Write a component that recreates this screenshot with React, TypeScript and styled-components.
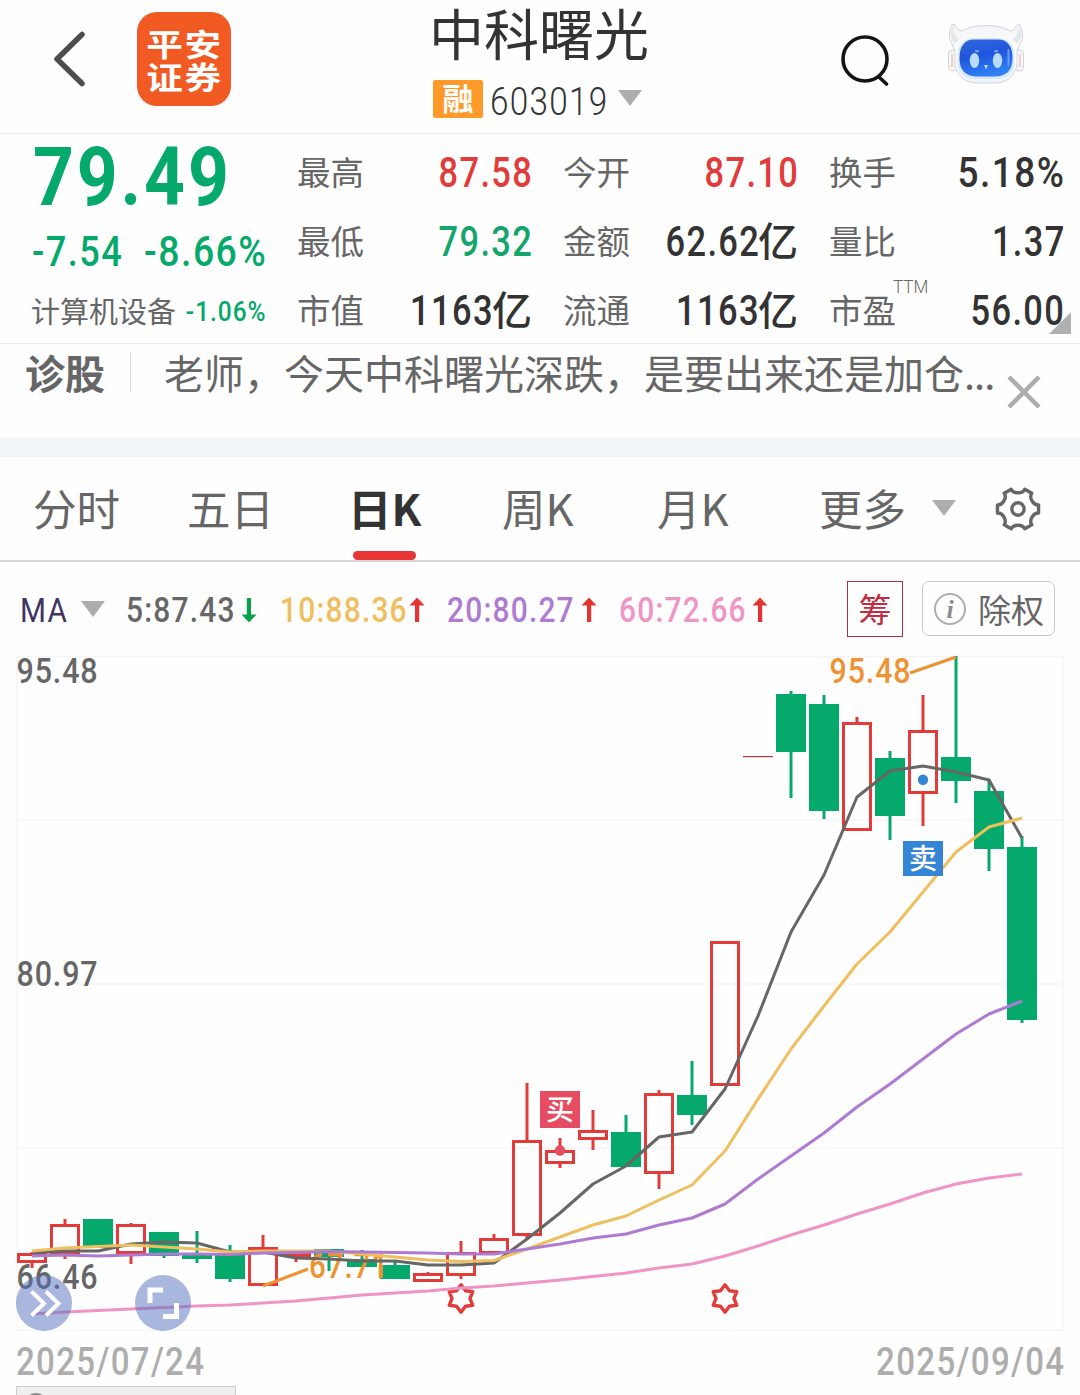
import React from 'react';
import styled, { createGlobalStyle } from 'styled-components';

const CJK = `'Noto Sans CJK SC', sans-serif`;
const GREEN = '#04a96b';
const RED = '#e23c3a';

const Global = createGlobalStyle`
  *, *::before, *::after { box-sizing: border-box; }
  body { margin: 0; background: #fefefe; font-family: ${CJK}; color: #666; }
`;

const Screen = styled.div`
  width: 1080px;
  height: 1395px;
  overflow: hidden;
  display: flex;
  flex-direction: column;
  background: #fefefe;
`;

/* Condensed numerals, squeezed towards one side */
const Num = styled.span<{ $size: number; $k?: number; $w?: number; $c?: string; $from?: string }>`
  display: inline-block;
  flex: none;
  font-family: Roboto, ${CJK};
  font-size: ${(p) => p.$size}px;
  font-weight: ${(p) => p.$w ?? 400};
  line-height: 1;
  letter-spacing: 0.04em;
  margin-right: -0.04em;
  color: ${(p) => p.$c ?? 'inherit'};
  white-space: pre;
  transform: scaleX(${(p) => p.$k ?? 0.82});
  transform-origin: ${(p) => (p.$from === 'right' ? 'calc(100% - 0.04em)' : 'left')} center;
`;

const Header = styled.header`
  height: 134px;
  flex: none;
  display: grid;
  grid-template-columns: 137px 94px 202px 217px 180px 60px 1fr;
  border-bottom: 1px solid #ebebeb;
`;
const BackCell = styled.div`padding: 30px 0 0 51px;`;
const Logo = styled.div`
  width: 94px;
  height: 94px;
  margin-top: 12px;
  border-radius: 20px;
  background: #f15a22;
  display: flex;
  flex-direction: column;
  align-items: center;
  padding-top: 14px;
`;
const LogoLine = styled.span`
  font-size: 31px;
  line-height: 33px;
  font-weight: 700;
  letter-spacing: 1.5px;
  margin-right: -1.5px;
  color: #fff;
  transform: scaleX(1.18);
`;
const TitleCell = styled.div`grid-column: 4;`;
const Title = styled.h1`
  margin: 0 0 0 -4px;
  font-size: 55px;
  line-height: 62px;
  height: 80px;
  font-weight: 400;
  color: #333;
  white-space: nowrap;
`;
const CodeRow = styled.div`
  display: flex;
  align-items: center;
  height: 38px;
  color: #333;
`;
const Badge = styled.span`
  width: 50px;
  height: 38px;
  margin-right: 7px;
  border-radius: 2px;
  background: #ff9a2a;
  color: #fff;
  font-size: 31px;
  line-height: 34px;
  font-weight: 700;
  text-align: center;
`;
const CodeBox = styled.span`
  width: 128px;
  height: 38px;
  display: flex;
  align-items: center;
  padding-top: 5px;
`;
const Caret = styled.i`
  flex: none;
  margin-top: -3px;
  border: 12.5px solid transparent;
  border-top: 16px solid #adadad;
  border-bottom: 0;
`;
const SearchCell = styled.div`grid-column: 6; padding: 33px 0 0 8px;`;
const RobotCell = styled.div`padding: 20px 0 0 55px;`;

const Quote = styled.section`
  position: relative;
  height: 210px;
  flex: none;
  display: flex;
  padding-left: 32px;
  border-bottom: 1px solid #ebebeb;
`;
const PriceBlock = styled.div`width: 266px; color: ${GREEN};`;
const PriceLine = styled.div`height: 85px; padding: 2px 0 0 1px;`;
const ChangeLine = styled.div`
  display: flex;
  width: 234px;
  height: 66px;
  align-items: center;
`;
const RightSlot = styled.span`
  flex: 1;
  min-width: 0;
  display: flex;
  justify-content: flex-end;
`;
const SectorLine = styled(ChangeLine)`height: 54px;`;
const Sector = styled.span`font-size: 29px; line-height: 40px; margin: -4px 0 0 -1px; color: #666; white-space: nowrap;`;
const Stats = styled.div`
  display: grid;
  grid-template-columns: repeat(3, 234px);
  grid-template-rows: repeat(3, 69px);
  column-gap: 32px;
  padding-top: 4px;
`;
const Stat = styled.div`
  display: flex;
  align-items: center;
  justify-content: space-between;
`;
const StatName = styled.span`
  position: relative;
  font-size: 33.5px;
  line-height: 40px;
  margin: -3px 0 0 -1px;
  white-space: nowrap;
`;
const Sup = styled.span`
  position: absolute;
  left: 64px;
  top: -12px;
  font: 300 19px/20px Roboto, sans-serif;
  transform: scaleX(0.9);
  transform-origin: left;
`;
const StatValue = styled.span<{ $c: string }>`
  display: flex;
  align-items: center;
  color: ${(p) => p.$c};
`;
const Unit = styled.span`
  font-size: 40px;
  line-height: 46px;
  font-weight: 500;
  margin: -6px 0 0 -1px;
`;
const Corner = styled.i`
  position: absolute;
  right: 9px;
  bottom: 9px;
  border-left: 22px solid transparent;
  border-bottom: 22px solid #b0b0b0;
`;

const Advice = styled.section`
  height: 94px;
  flex: none;
  display: flex;
  padding-left: 25px;
  font-size: 40px;
  line-height: 56px;
`;
const AdviceTag = styled.b`width: 105px; font-weight: 700;`;
const AdviceRule = styled.i`width: 1px; height: 40px; margin-top: 8px; background: #dcdcdc;`;
const AdviceText = styled.span`width: 876px; padding-left: 33px; white-space: nowrap; display: flex;`;
const Dots = styled.span`letter-spacing: -1px;`;
const CloseIcon = styled.svg`margin-top: 31px;`;
const Divider = styled.div`height: 19px; flex: none; background: #f3f4f8;`;

const Tabs = styled.nav`
  height: 105px;
  flex: none;
  display: grid;
  grid-template-columns: 154px 154px 161px 155px 162px 112px 62px 1fr;
  padding-left: 34px;
  border-bottom: 2px solid #d6d6d6;
`;
const Tab = styled.div<{ $on?: boolean }>`
  display: flex;
  flex-direction: column;
  font-size: 43.5px;
  line-height: 94px;
  height: 103px;
  padding-top: 4px;
  margin-left: ${(p) => (p.$on ? '6px' : '-1px')};
  font-weight: ${(p) => (p.$on ? 700 : 400)};
  color: ${(p) => (p.$on ? '#333' : '#666')};
  white-space: nowrap;
  &::after {
    content: '';
    display: ${(p) => (p.$on ? 'block' : 'none')};
    width: 63px;
    height: 9px;
    margin: -4px 0 0 5px;
    border-radius: 5px;
    background: #e83434;
    flex: none;
  }
`;
const TabIcon = styled.div`padding-top: 46px;`;
const GearBox = styled.div`padding-top: 28px;`;

const MaRow = styled.div`
  height: 94px;
  flex: none;
  display: grid;
  grid-template-columns: 61px 45px 154px 167px 172px 228px 75px 133px;
  padding-left: 20px;
`;
const MaCell = styled.div<{ $c: string }>`
  display: flex;
  align-items: center;
  height: 96px;
  color: ${(p) => p.$c};
`;
const NumSlot = styled.span<{ $w: number }>`
  width: ${(p) => p.$w}px;
  flex: none;
  display: flex;
`;
const ChipButton = styled.button`
  width: 56px;
  height: 56px;
  margin: 19px 0 0;
  padding: 0 0 2px;
  border: 1px solid #a83246;
  background: none;
  color: #c42a40;
  font: 400 33px/50px ${CJK};
`;
const RightsButton = styled.button`
  width: 133px;
  height: 55px;
  margin: 19px 0 0;
  padding: 0 0 0 11px;
  display: flex;
  align-items: center;
  gap: 12px;
  border: 1px solid #c8c8c8;
  border-radius: 7px;
  background: none;
  color: #666;
  font: 400 33px/50px ${CJK};
  white-space: nowrap;
`;

const ChartArea = styled.section`
  position: relative;
  height: 675px;
  flex: none;
`;
const ChartSvg = styled.svg`display: block; overflow: visible;`;
const Round = styled.button<{ $x: number }>`
  position: absolute;
  left: ${(p) => p.$x}px;
  top: 619px;
  width: 56px;
  height: 56px;
  padding: 0;
  border: 0;
  border-radius: 50%;
  background: rgba(83, 111, 189, 0.5);
`;
const Dates = styled.div`
  height: 55px;
  flex: none;
  display: flex;
  justify-content: space-between;
  align-items: center;
  padding: 7px 16px 0;
  color: #adadad;
`;
const BottomBox = styled.div`
  width: 220px;
  height: 40px;
  margin-left: 16px;
  border: 1px solid #ccc;
  background: #efefef;
  padding: 6px 0 0 7px;
`;
const Knob = styled.i`
  display: block;
  width: 24px;
  height: 24px;
  border-radius: 50%;
  border: 3px solid #8a8a8a;
`;

/* [up, bodyTop, bodyBottom, wickTop, wickBottom] in page pixels */
const candles: [number, number, number, number, number][] = [
  [1, 1253, 1263, 1252, 1268],
  [1, 1224, 1254, 1219, 1259],
  [0, 1219, 1248, 1219, 1248],
  [1, 1224, 1254, 1223, 1264],
  [0, 1232, 1256, 1232, 1258],
  [0, 1254, 1259, 1231, 1263],
  [0, 1254, 1279, 1245, 1282],
  [1, 1247, 1286, 1235, 1286],
  [1, 1252, 1257, 1252, 1262],
  [0, 1249, 1257, 1249, 1271],
  [0, 1259, 1267, 1250, 1267],
  [0, 1265, 1279, 1262, 1279],
  [1, 1273, 1282, 1272, 1282],
  [1, 1252, 1276, 1241, 1279],
  [1, 1238, 1254, 1234, 1254],
  [1, 1140, 1236, 1083, 1238],
  [1, 1150, 1164, 1138, 1168],
  [1, 1130, 1140, 1110, 1150],
  [0, 1132, 1167, 1115, 1167],
  [1, 1093, 1174, 1090, 1189],
  [0, 1095, 1115, 1061, 1125],
  [1, 941, 1086, 941, 1086],
  [1, 756, 757, 756, 757],
  [0, 694, 752, 691, 798],
  [0, 704, 811, 695, 819],
  [1, 722, 831, 717, 831],
  [0, 758, 816, 751, 840],
  [1, 730, 794, 695, 826],
  [0, 757, 781, 656, 803],
  [0, 791, 849, 779, 871],
  [0, 847, 1020, 836, 1023],
];
const ma5 = [1253, 1251, 1251, 1244, 1242, 1243, 1252, 1252, 1258, 1259, 1261, 1261, 1265, 1265, 1263, 1239, 1213, 1184, 1166, 1137, 1132, 1089, 1016, 932, 875, 797, 771, 766, 772, 780, 838];
const ma10 = [1251, 1248, 1246.5, 1245, 1247, 1249, 1252, 1251, 1251, 1251, 1254, 1257, 1260, 1261.5, 1260.5, 1249, 1237, 1225, 1216, 1200, 1185, 1151, 1099, 1049, 1006, 964, 932, 892, 852, 827, 818];
const ma20 = [1256, 1255, 1256, 1255, 1254, 1254, 1254.5, 1253, 1252.5, 1251.5, 1252, 1252.5, 1253, 1254, 1254, 1249, 1244, 1238, 1234, 1225, 1218, 1204, 1179, 1156, 1133, 1107, 1084, 1059, 1034, 1014, 1001];
const ma60 = [1314, 1312, 1310.5, 1309, 1307.5, 1306, 1305, 1303, 1301, 1298, 1295, 1293, 1291, 1288, 1286, 1283, 1280, 1276.5, 1273, 1268, 1264, 1256, 1246, 1235, 1225, 1214, 1204, 1193, 1184, 1178, 1174];

const cx = (i: number) => 32 + i * 33;
const line = (v: number[]) => v.map((y, i) => `${cx(i)},${y}`).join(' ');

function Candle({ i }: { i: number }) {
  const [up, t, b, wt, wb] = candles[i];
  const x = cx(i);
  if (b - t === 1) return <rect x={x - 15} y={t} width={30} height={1.2} fill="#b03a3a" />;
  if (!up)
    return (
      <g fill={GREEN}>
        <rect x={x - 1.5} y={wt} width={3} height={wb - wt} />
        <rect x={x - 15} y={t} width={30} height={b - t} />
      </g>
    );
  return (
    <g>
      {wt < t && <rect x={x - 1.5} y={wt} width={3} height={t - wt} fill={RED} />}
      {wb > b && <rect x={x - 1.5} y={b} width={3} height={wb - b} fill={RED} />}
      <rect x={x - 13.5} y={t + 1.5} width={27} height={b - t - 3} fill="none" stroke={RED} strokeWidth={3} />
    </g>
  );
}

function Star({ x, y }: { x: number; y: number }) {
  const pts = Array.from({ length: 12 }, (_, k) => {
    const r = k % 2 ? 9 : 13.6;
    const a = (k * Math.PI) / 6 - Math.PI / 2;
    return `${x + r * Math.cos(a)},${y + r * Math.sin(a)}`;
  }).join(' ');
  return <polygon points={pts} fill="#fff" stroke={RED} strokeWidth={3.4} strokeLinejoin="round" />;
}

function Label({ x, y, w, fill, children }: { x: number; y: number; w: number; fill: string; children: string }) {
  return (
    <text x={x} y={y} fill={fill} fontSize={35} fontWeight={500} fontFamily="Roboto, sans-serif" letterSpacing={1} textLength={w} lengthAdjust="spacingAndGlyphs">
      {children}
    </text>
  );
}

function Chart() {
  return (
    <ChartArea>
      <ChartSvg width={1080} height={675} viewBox="0 656 1080 675">
        <g stroke="#f5f5f5" strokeWidth={1.5} fill="none">
          <rect x={17} y={656.7} width={1046} height={673.5} />
          <path d="M17 820H1063M17 984H1063M17 1148H1063" />
        </g>
        <Label x={16.5} y={683} w={82} fill="#666">95.48</Label>
        <Label x={16.5} y={986} w={82} fill="#666">80.97</Label>
        <Label x={16.5} y={1289} w={82} fill="#666">66.46</Label>
        {candles.map((_, i) => <Candle key={i} i={i} />)}
        <Label x={829.5} y={683} w={82} fill="#ee9232">95.48</Label>
        <Label x={309} y={1278} w={80} fill="#ee9232">67.71</Label>
        <path d="M910 673L956 657M263 1286L308 1269" stroke="#ee9232" strokeWidth={3} />
        <Star x={461} y={1298.5} />
        <Star x={725} y={1298.5} />
        <g fill="none" strokeWidth={3} strokeLinejoin="round">
          <polyline points={line(ma5)} stroke="#666" />
          <polyline points={line(ma10)} stroke="#efbf5f" />
          <polyline points={line(ma20)} stroke="#ae7ad2" />
          <polyline points={line(ma60)} stroke="#f094c5" />
        </g>
        <circle cx={560} cy={1150.5} r={5.2} fill="#e64c62" />
        <circle cx={923} cy={779.7} r={5.2} fill="#3584d6" />
        <rect x={540} y={1091} width={40} height={37} fill="#e64c62" />
        <rect x={903} y={841} width={40} height={35} fill="#3584d6" />
        <g fill="#fff" fontSize={28} fontWeight={500} fontFamily={CJK} textAnchor="middle">
          <text x={560} y={1120}>买</text>
          <text x={923} y={869}>卖</text>
        </g>
      </ChartSvg>
      <Round $x={16} aria-label="展开">
        <svg width="56" height="56" fill="none" stroke="#fff" strokeWidth="4">
          <path d="M15.500 16.500L28 28.500L15.500 40.500M30 16.500L42.500 28.500L30 40.500" />
        </svg>
      </Round>
      <Round $x={135} aria-label="全屏">
        <svg width="56" height="56" fill="none" stroke="#fff" strokeWidth="5">
          <path d="M28 15H15V28M28 41.500H41.500V28" />
        </svg>
      </Round>
    </ChartArea>
  );
}

function Arrow({ up }: { up?: boolean }) {
  return (
    <svg width="16" height="26" viewBox="0 0 16 26">
      <g transform={up ? undefined : 'rotate(180 8 13)'} fill={up ? '#e23430' : '#08a04b'}>
        <rect x="6" y="6" width="4.200" height="19" />
        <path d="M8 0.500L15.500 8.500H0.500Z" />
      </g>
    </svg>
  );
}

function Gear() {
  const rot = (x: number, y: number, a: number) => {
    const r = (a * Math.PI) / 180;
    return `${(x * Math.cos(r) - y * Math.sin(r)).toFixed(2)} ${(x * Math.sin(r) + y * Math.cos(r)).toFixed(2)}`;
  };
  /* six notches, joined by the short outer edges of the teeth */
  const d = [30, 90, 150, 210, 270, 330]
    .map((a, n) => `${n ? 'L' : 'M'}${rot(19.8, -6.8, a)}C${rot(15, -4.6, a)} ${rot(15, 4.6, a)} ${rot(19.8, 6.8, a)}`)
    .join('');
  return (
    <svg width="48" height="48" viewBox="-24 -24 48 48" fill="none" stroke="#666" strokeWidth="3.400" strokeLinejoin="round">
      <path d={d + 'Z'} />
      <circle r="6.200" />
    </svg>
  );
}

function Robot() {
  return (
    <svg width="80" height="66" viewBox="945 20 80 66">
      <defs>
        <linearGradient id="face" x1="0" y1="0" x2="0.300" y2="1">
          <stop offset="0" stopColor="#3468dc" />
          <stop offset="0.500" stopColor="#1f55dd" />
          <stop offset="1" stopColor="#2f80f4" />
        </linearGradient>
        <linearGradient id="shell" x1="0" y1="0" x2="0" y2="1">
          <stop offset="0" stopColor="#f1f3f6" />
          <stop offset="0.500" stopColor="#fff" />
          <stop offset="1" stopColor="#eef3fb" />
        </linearGradient>
      </defs>
      <g stroke="#d3d3d7" fill="url(#shell)" strokeWidth="1">
        <rect x="948.500" y="50" width="9" height="21" rx="4" />
        <rect x="1014.500" y="50" width="9" height="21" rx="4" />
        <path d="M953 24C956 24 956 31 962 31C969 27 977 25.500 986 25.500S1003 27 1010 31C1016 31 1016 24 1019 24C1023 29 1024 38 1020 44L1017 51V66C1014 77 1005 83 996 83H976C967 83 958 77 955 66V51L952 44C948 38 949 29 953 24Z" />
      </g>
      <path d="M952 27C950 34 951 40 955 44L959 39C955 36 954 32 952 27ZM1020 27C1022 34 1021 40 1017 44L1013 39C1017 36 1018 32 1020 27Z" fill="#e4e7ec" />
      <path d="M952 54V67M1020 54V67" stroke="#ecd2cd" strokeWidth="2.500" />
      <rect x="957.500" y="38" width="57" height="41" rx="16" fill="#d9e8fb" />
      <path d="M974 39.500H998C1008 39.500 1012.500 47 1012.500 58C1012.500 71 1006 76.500 994 76.500H978C966 76.500 959.500 71 959.500 58C959.500 47 964 39.500 974 39.500Z" fill="url(#face)" />
      <g fill="#b9dcff">
        <ellipse cx="974.500" cy="60.500" rx="4.700" ry="7.400" />
        <ellipse cx="997.500" cy="60.500" rx="4.700" ry="7.400" />
        <path d="M984 65H988L986 69.500Z" />
      </g>
      <path d="M975 51.500Q977 50 978.500 52M994.500 52Q996 50 998 51.500" stroke="#8dbcff" strokeWidth="1.500" fill="none" />
      <path d="M1008.500 50V65" stroke="#6f9df2" strokeWidth="2" strokeLinecap="round" />
    </svg>
  );
}

const stats: { name: string; value: string; unit?: string; color: string; sup?: string; k?: number }[] = [
  { name: '最高', value: '87.58', color: RED },
  { name: '今开', value: '87.10', color: RED },
  { name: '换手', value: '5.18%', color: '#333', k: 0.88 },
  { name: '最低', value: '79.32', color: '#14a56c' },
  { name: '金额', value: '62.62', unit: '亿', color: '#333' },
  { name: '量比', value: '1.37', color: '#333' },
  { name: '市值', value: '1163', unit: '亿', color: '#333' },
  { name: '流通', value: '1163', unit: '亿', color: '#333' },
  { name: '市盈', value: '56.00', color: '#333', sup: 'TTM' },
];

const mas = [
  { text: '5:87.43', color: '#666', w: 115, up: false },
  { text: '10:88.36', color: '#efbf5f', w: 129, up: true },
  { text: '20:80.27', color: '#ae7ad2', w: 134, up: true },
  { text: '60:72.66', color: '#f094c5', w: 133, up: true },
];

export default function App() {
  return (
    <Screen>
      <Global />
      <Header>
        <BackCell>
          <svg width="36" height="60" fill="none" stroke="#4d4d4d" strokeWidth="5.500" strokeLinecap="round" strokeLinejoin="round">
            <path d="M31 4.500L6 29L31 53.500" />
          </svg>
        </BackCell>
        <Logo>
          <LogoLine>平安</LogoLine>
          <LogoLine>证券</LogoLine>
        </Logo>
        <TitleCell>
          <Title>中科曙光</Title>
          <CodeRow>
            <Badge>融</Badge>
            <CodeBox><Num $size={38} $w={300} $k={0.875}>603019</Num></CodeBox>
            <Caret />
          </CodeRow>
        </TitleCell>
        <SearchCell>
          <svg width="54" height="56" fill="none" stroke="#141414" strokeWidth="3.600" strokeLinecap="round">
            <circle cx="27" cy="26" r="22" />
            <path d="M41 44L48.500 51" />
          </svg>
        </SearchCell>
        <RobotCell><Robot /></RobotCell>
      </Header>

      <Quote>
        <PriceBlock>
          <PriceLine><Num $size={82} $w={700} $k={0.87}>79.49</Num></PriceLine>
          <ChangeLine>
            <Num $size={42} $w={500} $k={0.86}>-7.54</Num>
            <RightSlot><Num $size={42} $w={500} $k={0.89} $from="right">-8.66%</Num></RightSlot>
          </ChangeLine>
          <SectorLine>
            <Sector>计算机设备</Sector>
            <RightSlot><Num $size={27.5} $w={500} $k={0.89} $from="right">-1.06%</Num></RightSlot>
          </SectorLine>
        </PriceBlock>
        <Stats>
          {stats.map((s) => (
            <Stat key={s.name}>
              <StatName>{s.name}{s.sup && <Sup>{s.sup}</Sup>}</StatName>
              <StatValue $c={s.color}>
                <Num $size={42} $w={500} $k={s.k} $from="right">{s.value}</Num>
                {s.unit && <Unit>{s.unit}</Unit>}
              </StatValue>
            </Stat>
          ))}
        </Stats>
        <Corner />
      </Quote>

      <Advice>
        <AdviceTag>诊股</AdviceTag>
        <AdviceRule />
        <AdviceText>老师，今天中科曙光深跌，是要出来还是加仓<Dots>...</Dots></AdviceText>
        <CloseIcon width="34" height="34" stroke="#adadad" strokeWidth="4.500">
          <path d="M2 2L32 32M32 2L2 32" />
        </CloseIcon>
      </Advice>
      <Divider />

      <Tabs>
        <Tab>分时</Tab>
        <Tab>五日</Tab>
        <Tab $on>日K</Tab>
        <Tab>周K</Tab>
        <Tab>月K</Tab>
        <Tab>更多</Tab>
        <TabIcon><Caret as="div" style={{ width: 0 }} /></TabIcon>
        <GearBox><Gear /></GearBox>
      </Tabs>

      <MaRow>
        <MaCell $c="#3d3560"><Num $size={33} $k={0.9}>MA</Num></MaCell>
        <MaCell $c="#666"><Caret /></MaCell>
        {mas.map((m) => (
          <MaCell key={m.text} $c={m.color}>
            <NumSlot $w={m.w}><Num $size={35} $w={500} $k={0.855}>{m.text}</Num></NumSlot>
            <Arrow up={m.up} />
          </MaCell>
        ))}
        <ChipButton>筹</ChipButton>
        <RightsButton>
          <svg width="32" height="32" viewBox="0 0 32 32">
            <circle cx="16" cy="16" r="15" fill="none" stroke="#adadad" strokeWidth="2" />
            <text x="16" y="24.500" textAnchor="middle" fontFamily="'Liberation Serif', serif" fontStyle="italic" fontWeight="700" fontSize="26" fill="#8c8c8c">i</text>
          </svg>
          除权
        </RightsButton>
      </MaRow>

      <Chart />
      <Dates>
        <Num $size={38} $w={500} $k={0.87}>2025/07/24</Num>
        <Num $size={38} $w={500} $k={0.87} $from="right">2025/09/04</Num>
      </Dates>
      <BottomBox><Knob /></BottomBox>
    </Screen>
  );
}
